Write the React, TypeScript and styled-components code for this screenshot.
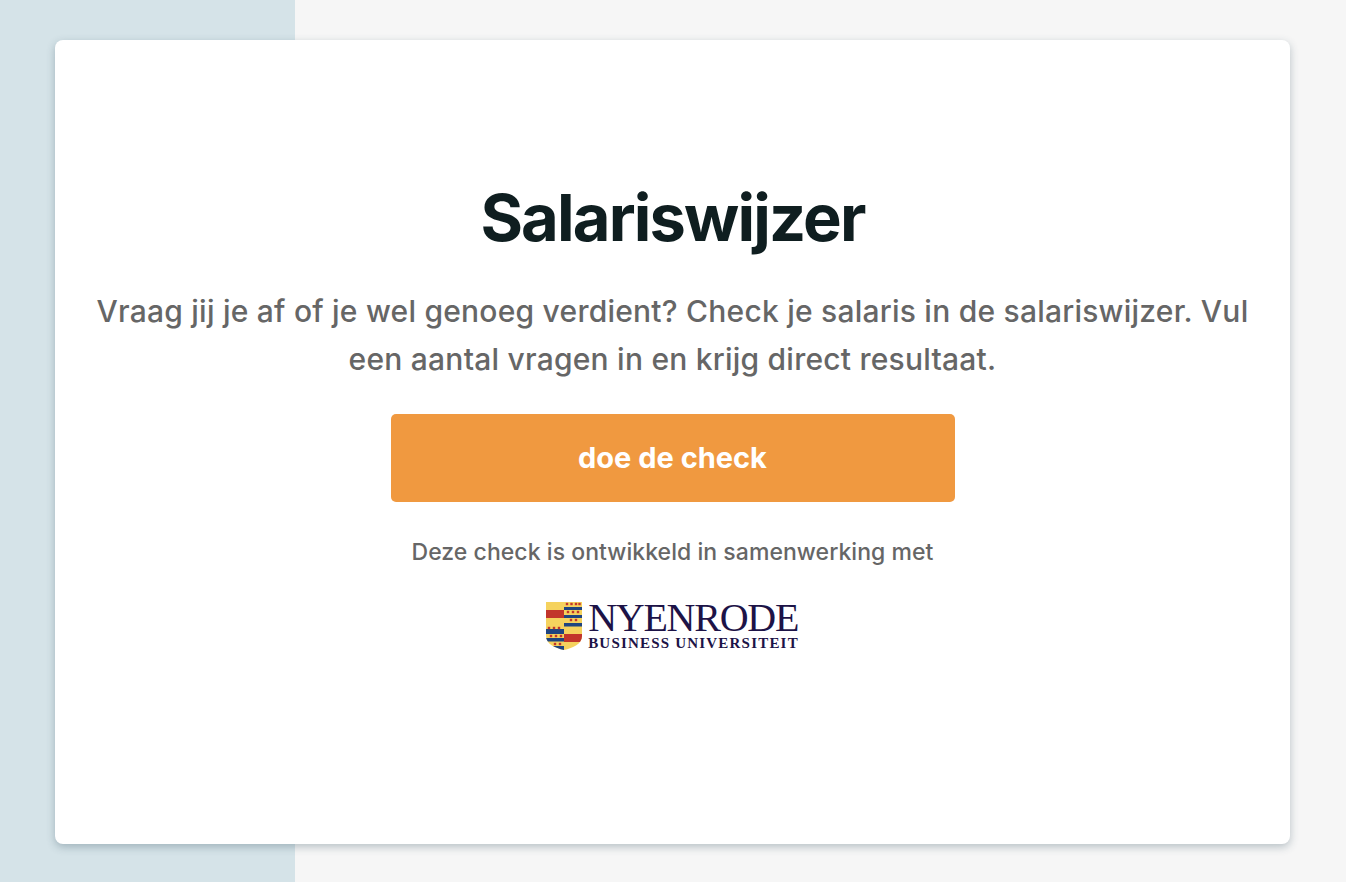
import React from "react";
import styled, { createGlobalStyle } from "styled-components";

const Global = createGlobalStyle`
  html, body { margin: 0; padding: 0; height: 100%; }
  body { font-family: Inter, "Noto Sans", "Liberation Sans", sans-serif; }
`;

const Page = styled.main`
  box-sizing: border-box;
  width: 100%;
  height: 882px;
  padding: 40px 56px 38px 55px;
  background: linear-gradient(to right, #d5e3e8 0, #d5e3e8 295px, #f6f6f6 295px, #f6f6f6 100%);
`;

const Card = styled.section`
  box-sizing: border-box;
  height: 804px;
  padding-top: 140px;
  background: #fff;
  border-radius: 8px;
  box-shadow: 0 3px 8px rgba(40, 70, 85, 0.3);
  display: flex;
  flex-direction: column;
  align-items: center;
`;

const Title = styled.h1`
  margin: 0;
  font-size: 65px;
  line-height: 76px;
  font-weight: 700;
  color: #0f1e20;
  letter-spacing: -1.85px;
`;

const Lead = styled.p`
  margin: 31px 0 0;
  width: 1170px;
  text-align: center;
  font-size: 30px;
  line-height: 48px;
  font-weight: 500;
  color: #666;
  letter-spacing: 0.23px;
`;

const CheckButton = styled.button`
  margin-top: 31px;
  width: 564px;
  height: 88px;
  padding: 0 0 2px;
  border: 0;
  border-radius: 5px;
  background: #f09940;
  color: #fff;
  font-family: inherit;
  font-size: 29px;
  font-weight: 700;
`;

const Note = styled.p`
  margin: 36px 0 0;
  font-size: 23px;
  line-height: 28px;
  font-weight: 500;
  color: #666;
  letter-spacing: 0.05px;
`;

const Logo = styled.div`
  margin-top: 36px;
  display: flex;
  align-items: flex-start;
  gap: 6px;
`;

const Wordmark = styled.div`
  display: flex;
  flex-direction: column;
  font-family: "Liberation Serif", serif;
  color: #1d1347;
`;

const WordmarkName = styled.span`
  font-size: 40px;
  line-height: 32px;
  letter-spacing: -1.25px;
`;

const WordmarkSub = styled.span`
  margin-top: 2px;
  font-size: 15px;
  line-height: 15px;
  font-weight: 700;
  letter-spacing: 1.2px;
  white-space: nowrap;
`;

const RED = "#c2352b";
const NAVY = "#1f4480";
const GOLD = "#f5d25e";

const stars: [number, number][] = [
  [21, 2], [25.5, 2], [30, 2], [33.5, 2],
  [22, 10], [27, 10], [32, 10],
  [25, 18], [30, 18],
  [3, 26], [8, 26], [13, 26],
  [5, 34], [10, 34], [15, 34],
  [9, 42], [14, 42],
];

const Shield = () => (
  <svg width="36" height="48" viewBox="0 0 36 48" aria-hidden="true">
    <defs>
      <clipPath id="sh">
        <path d="M0 0H36V34C36 42 27 46 18 48C9 46 0 42 0 34Z" />
      </clipPath>
    </defs>
    <g clipPath="url(#sh)">
      <rect width="36" height="48" fill={GOLD} />
      <rect x="0" y="8" width="18" height="8" fill={RED} />
      <rect x="0" y="27" width="18" height="5" fill={NAVY} />
      <rect x="0" y="36" width="18" height="3.5" fill={NAVY} />
      <rect x="6" y="44" width="12" height="4" fill={NAVY} />
      <rect x="18" y="5" width="18" height="3" fill={NAVY} />
      <rect x="18" y="13" width="18" height="3" fill={NAVY} />
      <rect x="18" y="21" width="18" height="3.5" fill={NAVY} />
      <rect x="18" y="32" width="18" height="8" fill={RED} />
      {stars.map(([x, y]) => (
        <rect key={`${x}-${y}`} x={x - 1.2} y={y - 1.2} width="2.4" height="2.4" fill={RED} />
      ))}
    </g>
  </svg>
);

export default function App() {
  return (
    <>
      <Global />
      <Page>
        <Card>
          <Title>Salariswijzer</Title>
          <Lead>
            Vraag jij je af of je wel genoeg verdient? Check je salaris in de salariswijzer. Vul een aantal vragen in en krijg direct resultaat.
          </Lead>
          <CheckButton>doe de check</CheckButton>
          <Note>Deze check is ontwikkeld in samenwerking met</Note>
          <Logo>
            <Shield />
            <Wordmark>
              <WordmarkName>NYENRODE</WordmarkName>
              <WordmarkSub>BUSINESS UNIVERSITEIT</WordmarkSub>
            </Wordmark>
          </Logo>
        </Card>
      </Page>
    </>
  );
}
